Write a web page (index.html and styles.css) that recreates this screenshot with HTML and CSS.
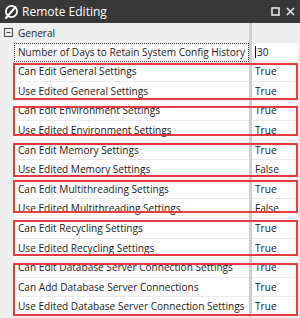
FILE: index.html
```html
<!DOCTYPE html>
<html lang="en">

<head>
  <meta charset="UTF-8" />
  <meta name="viewport" content="width=device-width, initial-scale=1.0" />
  <title>Remote Editing</title>
  <link rel="stylesheet" href="styles.css">
</head>

<body>
  <div class="window">
    <div class="titlebar">
      <svg class="logo" width="16" height="16" viewBox="0 0 16 16">
        <circle cx="8.5" cy="7.5" r="5.6" fill="none" stroke="#fff" stroke-width="1.8" />
        <line x1="3" y1="14" x2="12.5" y2="3" stroke="#fff" stroke-width="2" stroke-linecap="round" />
      </svg>
      <span class="title">Remote Editing</span>
      <div class="controls">
        <svg width="9" height="9" viewBox="0 0 9 9">
          <rect x="1" y="1" width="7" height="7" fill="none" stroke="#e6e6e6" stroke-width="1.6" />
        </svg>
        <svg width="9" height="9" viewBox="0 0 9 9">
          <path d="M1 1 L8 8 M8 1 L1 8" stroke="#e6e6e6" stroke-width="1.6" />
        </svg>
      </div>
    </div>

    <div class="grid">
      <div class="group">
        <svg class="toggle" width="9" height="9" viewBox="0 0 9 9">
          <rect x="0.5" y="0.5" width="8" height="8" fill="none" stroke="#444" />
          <line x1="2.5" y1="4.5" x2="6.5" y2="4.5" stroke="#444" />
        </svg>
        <span>General</span>
      </div>

      <div class="row">
        <div class="name focus">Number of Days to Retain System Config History</div>
        <div class="value"><span class="caret"></span>30</div>
      </div>
      <div class="row">
        <div class="name">Can Edit General Settings</div>
        <div class="value">True</div>
      </div>
      <div class="row">
        <div class="name">Use Edited General Settings</div>
        <div class="value">True</div>
      </div>
      <div class="row">
        <div class="name">Can Edit Environment Settings</div>
        <div class="value">True</div>
      </div>
      <div class="row">
        <div class="name">Use Edited Environment Settings</div>
        <div class="value">True</div>
      </div>
      <div class="row">
        <div class="name">Can Edit Memory Settings</div>
        <div class="value">True</div>
      </div>
      <div class="row">
        <div class="name">Use Edited Memory Settings</div>
        <div class="value">False</div>
      </div>
      <div class="row">
        <div class="name">Can Edit Multithreading Settings</div>
        <div class="value">True</div>
      </div>
      <div class="row">
        <div class="name">Use Edited Multithreading Settings</div>
        <div class="value">False</div>
      </div>
      <div class="row">
        <div class="name">Can Edit Recycling Settings</div>
        <div class="value">True</div>
      </div>
      <div class="row">
        <div class="name">Use Edited Recycling Settings</div>
        <div class="value">True</div>
      </div>
      <div class="row">
        <div class="name">Can Edit Database Server Connection Settings</div>
        <div class="value">True</div>
      </div>
      <div class="row">
        <div class="name">Can Add Database Server Connections</div>
        <div class="value">True</div>
      </div>
      <div class="row">
        <div class="name">Use Edited Database Server Connection Settings</div>
        <div class="value">True</div>
      </div>

      <!-- marcações vermelhas por cima da grade -->
      <div class="mark mark-general"></div>
      <div class="mark mark-environment"></div>
      <div class="mark mark-memory"></div>
      <div class="mark mark-threads"></div>
      <div class="mark mark-recycling"></div>
      <div class="mark mark-database"></div>
    </div>
  </div>
</body>

</html>
```

FILE: styles.css
```css
* {
  box-sizing: border-box;
}

body {
  margin: 0;
  font-family: "Open Sans", "Noto Sans", sans-serif;
  font-size: 10.1px;
  color: #1a1a1a;
  background: #f0f0f0;
}

.window {
  width: 300px;
  height: 318px;
  overflow: hidden;
  background: #f0f0f0;
}

.titlebar {
  height: 23px;
  background: #383838;
  color: #ffffff;
  display: flex;
  align-items: center;
  padding: 0 4px 0 3px;
}

.logo {
  margin-right: 3px;
}

.title {
  font-size: 12px;
  flex: 1;
}

.controls {
  display: flex;
  gap: 6px;
  align-items: center;
  padding-right: 1px;
}

.controls svg {
  display: block;
}

.grid {
  position: relative;
}

.group {
  height: 19.6px;
  display: flex;
  align-items: center;
  background: linear-gradient(to right, #efefef 249px, #cfcfcf 249px, #cfcfcf 252px, #efefef 252px);
  padding-left: 4px;
}

.toggle {
  margin-right: 5px;
}

.row {
  height: 19.6px;
  display: grid;
  grid-template-columns: 14px 235px 3px 45px 3px;
  background: linear-gradient(to right, #efefef 14px, transparent 14px);
}

.name {
  grid-column: 2;
  background: #ffffff;
  border-bottom: 1px solid #ececec;
  padding-left: 4px;
  line-height: 18.6px;
  white-space: nowrap;
  overflow: hidden;
}

.value {
  grid-column: 4;
  background: #ffffff;
  border-bottom: 1px solid #ececec;
  padding-left: 3px;
  line-height: 18.6px;
  white-space: nowrap;
  overflow: hidden;
}

.row::after {
  content: "";
  grid-column: 3;
  grid-row: 1;
  background: #cfcfcf;
}

.focus {
  border: 1px dotted #333;
  padding-left: 3px;
  line-height: 17.6px;
}

.caret {
  display: inline-block;
  width: 1px;
  height: 12px;
  background: #111;
  vertical-align: -2px;
  margin-right: 1px;
}

.mark {
  position: absolute;
  left: 13px;
  width: 285px;
  border: 2px solid #ea3a40;
}

.mark-general {
  top: 40px;
  height: 37px;
}

.mark-environment {
  top: 83px;
  height: 30px;
}

.mark-memory {
  top: 120px;
  height: 34px;
}

.mark-threads {
  top: 157px;
  height: 33px;
}

.mark-recycling {
  top: 197px;
  height: 36px;
}

.mark-database {
  top: 240px;
  height: 53px;
}
```
